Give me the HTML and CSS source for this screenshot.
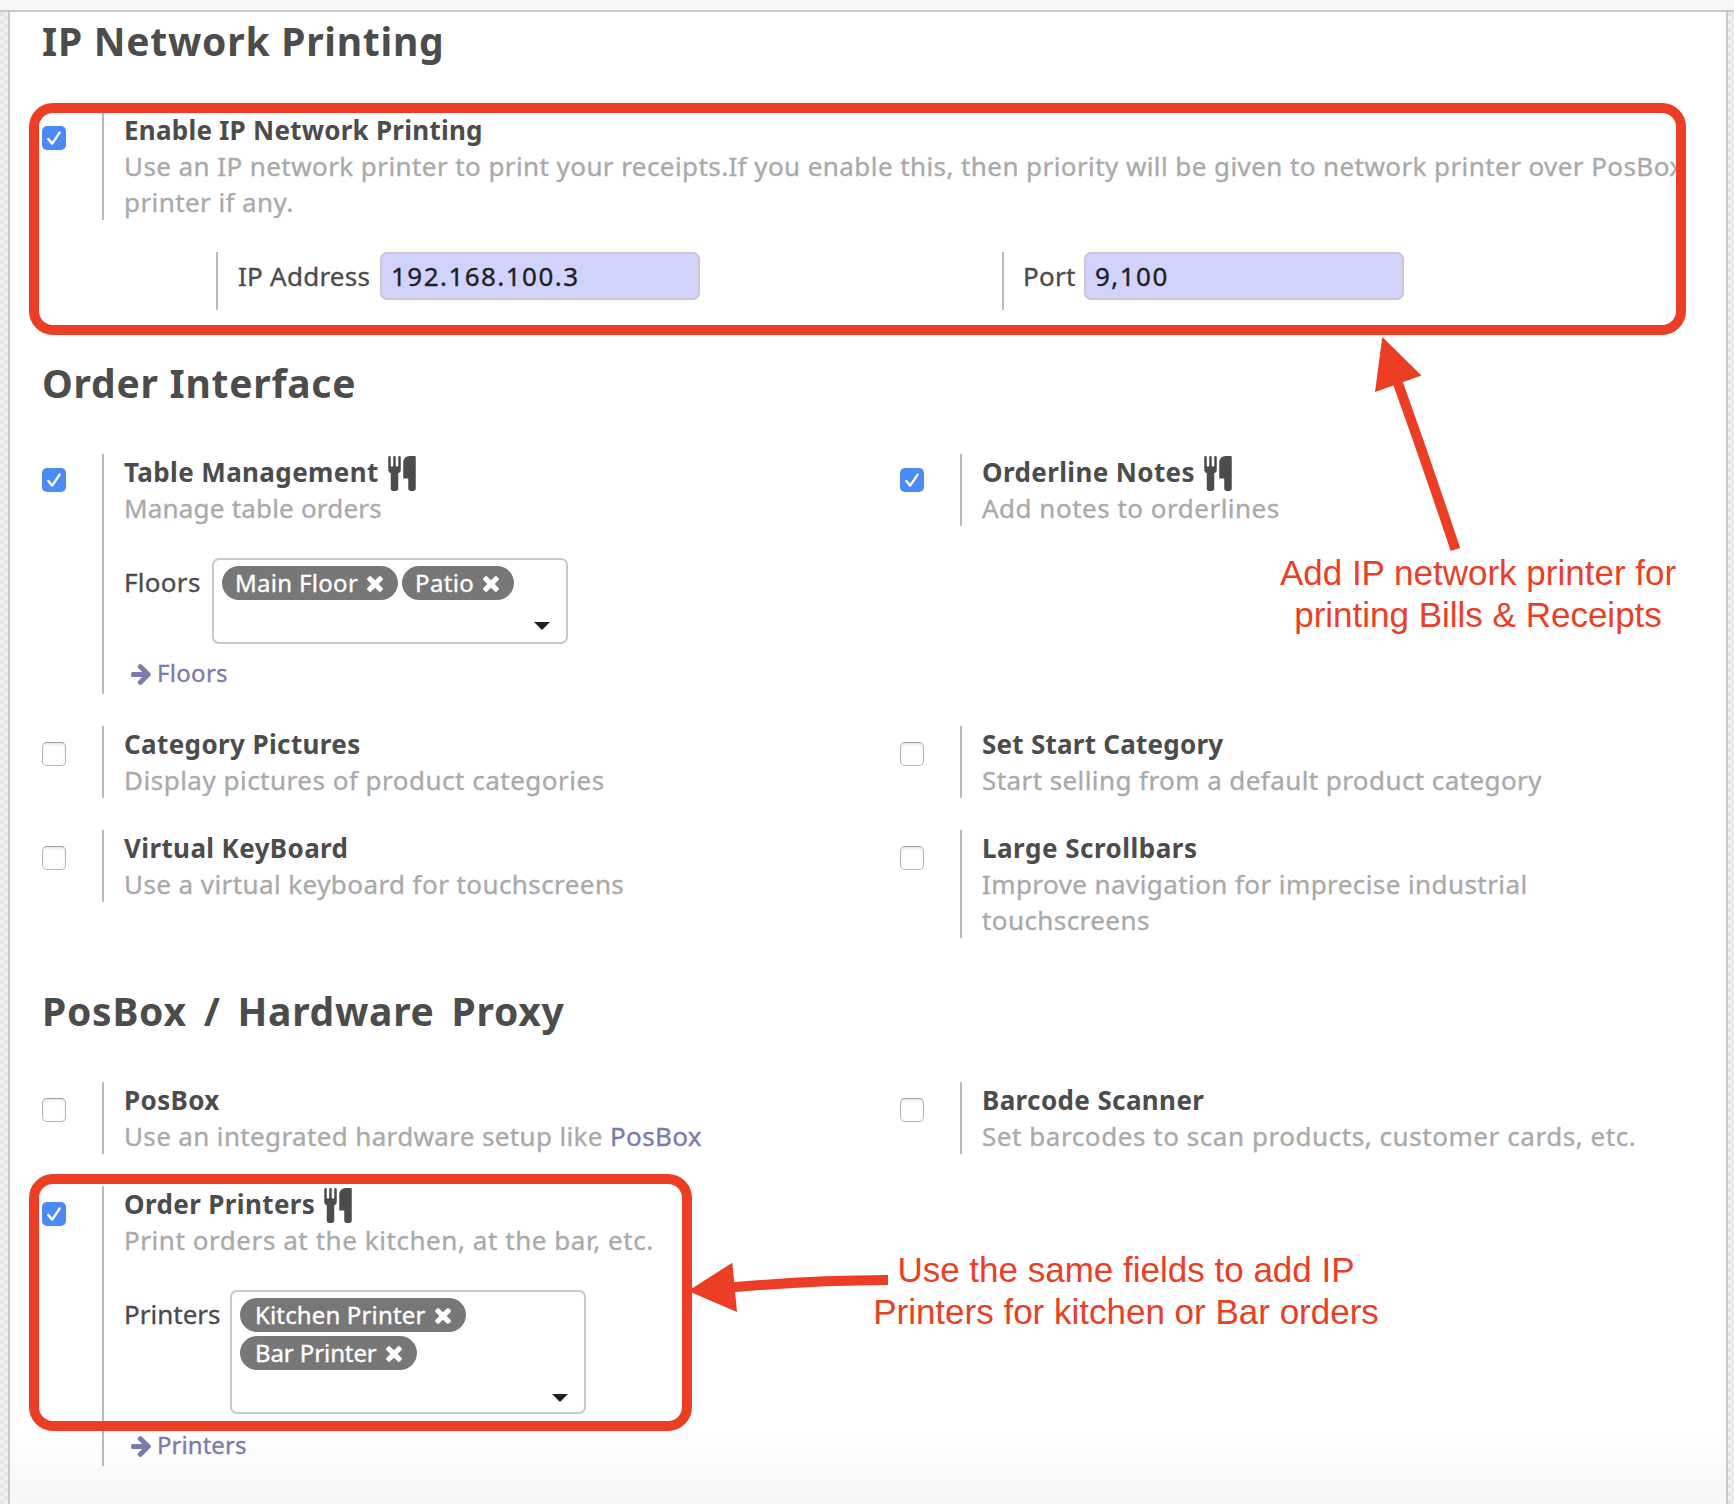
FILE: index.html
```
<!DOCTYPE html>
<html lang="en">
<head>
<meta charset="utf-8">
<title>Point of Sale Settings</title>
<link rel="stylesheet" href="styles.css">
</head>
<body>
<svg class="defs" width="0" height="0" aria-hidden="true">
  <symbol id="cutlery" viewBox="0 64 1408 1792"><path d="M640 128v640q0 61-35.5 111t-92.5 70v779q0 52-38 90t-90 38h-128q-52 0-90-38t-38-90v-779q-57-20-92.5-70t-35.5-111v-640q0-26 19-45t45-19 45 19 19 45v416q0 26 19 45t45 19 45-19 19-45v-416q0-26 19-45t45-19 45 19 19 45v416q0 26 19 45t45 19 45-19 19-45v-416q0-26 19-45t45-19 45 19 19 45zm768 0v1600q0 52-38 90t-90 38h-128q-52 0-90-38t-38-90v-512h-224q-13 0-22.5-9.5t-9.5-22.5v-800q0-132 94-226t226-94h256q26 0 45 19t19 45z"/></symbol>
  <symbol id="times" viewBox="302 366 1188 1188"><path d="M1490 1322q0 40-28 68l-136 136q-28 28-68 28t-68-28l-294-294-294 294q-28 28-68 28t-68-28l-136-136q-28-28-28-68t28-68l294-294-294-294q-28-28-28-68t28-68l136-136q28-28 68-28t68 28l294 294 294-294q28-28 68-28t68 28l136 136q28 28 28 68t-28 68l-294 294 294 294q28 28 28 68z"/></symbol>
  <symbol id="arrow" viewBox="128 181 1472 1558"><path d="M1600 960q0 54-37 91l-651 651q-39 37-91 37-51 0-90-37l-75-75q-38-38-38-91t38-91l293-293h-704q-52 0-84.5-37.5t-32.5-90.5v-128q0-53 32.5-90.5t84.5-37.5h704l-293-294q-38-36-38-90t38-90l75-75q38-38 90-38 53 0 91 38l651 651q37 35 37 90z"/></symbol>
  <symbol id="check" viewBox="0 0 24 24"><path d="M6.3 13l3.9 4.6L17.6 6.6" fill="none" stroke="#fff" stroke-width="2.4" stroke-linecap="round" stroke-linejoin="round"/></symbol>
</svg>

<div class="toolbar"></div>
<main class="sheet">
  <section class="section">
    <h2>IP Network Printing</h2>
    <div class="setting">
      <span class="box box-on box-high"><svg><use href="#check"/></svg></span>
      <div class="pane">
        <div class="title title-snug">Enable IP Network Printing</div>
        <div class="desc desc-snug">Use an IP network printer to print your receipts.If you enable this, then priority will be given to network printer over PosBox<br>printer if any.</div>
      </div>
    </div>
    <div class="network">
      <div class="field"><label class="label-ip">IP Address</label><div class="input">192.168.100.3</div></div>
      <div class="field"><label class="label-port">Port</label><div class="input">9,100</div></div>
    </div>
  </section>

  <section class="section">
    <h2>Order Interface</h2>
    <div class="grid">
      <div class="setting">
        <span class="box box-on box-high"><svg><use href="#check"/></svg></span>
        <div class="pane">
          <div class="title">Table Management<svg class="cutlery"><use href="#cutlery"/></svg></div>
          <div class="desc desc-tight">Manage table orders</div>
          <div class="many">
            <label class="label-floors">Floors</label>
            <div class="select">
              <span class="tag">Main Floor<svg><use href="#times"/></svg></span>
              <span class="tag">Patio<svg><use href="#times"/></svg></span>
              <i class="caret"></i>
            </div>
          </div>
          <a class="link"><svg><use href="#arrow"/></svg>Floors</a>
        </div>
      </div>
      <div class="setting">
        <span class="box box-on box-high"><svg><use href="#check"/></svg></span>
        <div class="pane">
          <div class="title">Orderline Notes<svg class="cutlery"><use href="#cutlery"/></svg></div>
          <div class="desc">Add notes to orderlines</div>
        </div>
      </div>
      <div class="setting">
        <span class="box"></span>
        <div class="pane">
          <div class="title">Category Pictures</div>
          <div class="desc">Display pictures of product categories</div>
        </div>
      </div>
      <div class="setting">
        <span class="box"></span>
        <div class="pane">
          <div class="title title-snug">Set Start Category</div>
          <div class="desc desc-snug">Start selling from a default product category</div>
        </div>
      </div>
      <div class="setting">
        <span class="box"></span>
        <div class="pane">
          <div class="title">Virtual KeyBoard</div>
          <div class="desc desc-snug">Use a virtual keyboard for touchscreens</div>
        </div>
      </div>
      <div class="setting">
        <span class="box"></span>
        <div class="pane">
          <div class="title title-wide">Large Scrollbars</div>
          <div class="desc desc-snug">Improve navigation for imprecise industrial<br>touchscreens</div>
        </div>
      </div>
    </div>
  </section>

  <section class="section">
    <h2 class="spaced">PosBox / Hardware Proxy</h2>
    <div class="grid">
      <div class="setting">
        <span class="box"></span>
        <div class="pane">
          <div class="title">PosBox</div>
          <div class="desc desc-link">Use an integrated hardware setup like <a>PosBox</a></div>
        </div>
      </div>
      <div class="setting">
        <span class="box"></span>
        <div class="pane">
          <div class="title">Barcode Scanner</div>
          <div class="desc desc-wide">Set barcodes to scan products, customer cards, etc.</div>
        </div>
      </div>
      <div class="setting">
        <span class="box box-on"><svg><use href="#check"/></svg></span>
        <div class="pane">
          <div class="title">Order Printers<svg class="cutlery"><use href="#cutlery"/></svg></div>
          <div class="desc desc-wide">Print orders at the kitchen, at the bar, etc.</div>
          <div class="many">
            <label class="label-printers">Printers</label>
            <div class="select select-tall">
              <span class="tag tag-inset">Kitchen Printer<svg><use href="#times"/></svg></span>
              <span class="tag tag-inset tag-tight">Bar Printer<svg><use href="#times"/></svg></span>
              <i class="caret"></i>
            </div>
          </div>
          <a class="link link-low"><svg><use href="#arrow"/></svg>Printers</a>
        </div>
      </div>
    </div>
  </section>
</main>
<div class="fade"></div>

<div class="outline outline-network"></div>
<div class="outline outline-printers"></div>
<svg class="arrows" width="1734" height="1504" viewBox="0 0 1734 1504">
  <path class="head" d="M1382.3 337L1421.5 375.5L1375 392Z"/>
  <path class="shaft" d="M1396.5 379Q1427 464 1455.4 549.5"/>
  <path class="head" d="M688 1291L732.3 1262.7L737 1312Z"/>
  <path class="shaft" d="M730 1287.6Q810 1280.3 888 1280"/>
</svg>
<p class="note note-network">Add IP network printer for<br>printing Bills &amp; Receipts</p>
<p class="note note-printers">Use the same fields to add IP<br>Printers for kitchen or Bar orders</p>
</body>
</html>
```
FILE: styles.css
```
* { box-sizing: border-box; }

body {
  position: relative;
  width: 1734px;
  height: 1504px;
  margin: 0;
  overflow: hidden;
  background: repeating-conic-gradient(#e4e4e4 0 25%, #efefef 0 50%) 0 0 / 8px 8px;
  color: #4c4c4c;
  font: 26px/36px "Noto Sans", sans-serif;
  letter-spacing: 0.5px;
  white-space: nowrap;
  -webkit-text-stroke: 0.35px currentColor;
}

svg { display: block; fill: currentColor; }
.defs { position: absolute; }

.toolbar {
  height: 12px;
  background: #f8f8f8;
  border-bottom: 2px solid #c8c8c8;
}

.sheet {
  height: 1492px;
  margin: 0 6px 0 8px;
  padding: 7px 0 0 32px;
  background: #fff;
  border: solid #c8c8d3;
  border-width: 0 2px;
}

.section { margin-bottom: 51px; }

h2 {
  margin: 0 0 49px;
  font-size: 39px;
  font-weight: 700;
  line-height: 44px;
  letter-spacing: 0.75px;
  -webkit-text-stroke: 0;
}
.spaced { word-spacing: 6px; }

.grid {
  display: grid;
  grid-template-columns: 858px 1fr;
  row-gap: 32px;
  align-items: start;
}

.setting { display: flex; align-items: stretch; }

.box {
  flex: none;
  width: 24px;
  height: 24px;
  margin: 16px 36px 0 0;
  border: 1px solid #b4b4b4;
  border-top-color: #9c9c9c;
  border-radius: 5px;
  background: #fff;
  box-shadow: inset 0 2px 2px #ececec;
}
.box-on { border: 0; background: #4b89f6; box-shadow: none; }
.box-high { margin-top: 14px; }
.box svg { width: 24px; height: 24px; }

.pane { border-left: 2px solid #bbb; padding-left: 20px; }

.title {
  display: flex;
  height: 36px;
  font-weight: 700;
  letter-spacing: 0.38px;
  -webkit-text-stroke: 0;
}
.title-snug { letter-spacing: 0.25px; }
.title-wide { letter-spacing: 0.5px; }
.cutlery { width: 28px; height: 35px; margin: 2px 0 0 9px; }

.desc { color: #aaa; }
.desc-tight { letter-spacing: 0.2px; }
.desc-snug { letter-spacing: 0.42px; }
.desc-link { letter-spacing: 0.36px; }
.desc-wide { letter-spacing: 0.56px; }
a { color: #7c7bad; }

.network {
  display: grid;
  grid-template-columns: 786px 1fr;
  margin: 32px 0 0 174px;
}
.field {
  display: flex;
  height: 58px;
  padding-left: 20px;
  border-left: 2px solid #bbb;
}
.field label { padding-top: 6px; letter-spacing: 0.25px; }
.label-ip { width: 142px; }
.label-port { width: 61px; margin-left: -1px; }
.input {
  width: 320px;
  height: 48px;
  padding: 4px 9px;
  border: 2px solid #c8c8c8;
  border-radius: 7px;
  background: #d2d2ff;
  color: #1f1f1f;
  letter-spacing: 1.45px;
}

.many { display: flex; align-items: flex-start; margin-top: 32px; }
.many label { padding-top: 6px; }
.label-floors { width: 88px; letter-spacing: 0.3px; }
.label-printers { width: 106px; letter-spacing: 0; }

.select {
  position: relative;
  display: flex;
  flex-wrap: wrap;
  align-content: flex-start;
  gap: 4px;
  width: 356px;
  height: 86px;
  padding: 6px 8px;
  border: 2px solid #c8c8c8;
  border-radius: 7px;
}
.select-tall { height: 124px; padding-right: 80px; }

.tag {
  display: flex;
  height: 34px;
  padding: 0 15px 0 13px;
  border-radius: 17px;
  background: #777;
  color: #fff;
  font-size: 24px;
  line-height: 34px;
  letter-spacing: 0.3px;
}
.tag-inset { padding-left: 15px; letter-spacing: 0.15px; }
.tag-tight { letter-spacing: -0.1px; }
.tag svg { width: 16px; height: 16px; margin: 10px 0 0 9px; }

.caret {
  position: absolute;
  right: 16px;
  bottom: 12px;
  border: solid transparent;
  border-width: 8px 8px 0;
  border-top-color: #1f1f1f;
}
.select-tall .caret { bottom: 10px; }

.link {
  display: flex;
  height: 39px;
  margin: 11px 0 0 7px;
  font-size: 24px;
  letter-spacing: 0.3px;
}
.link-low { margin-top: 13px; letter-spacing: 0.05px; }
.link svg { width: 20px; height: 21px; margin: 9px 6px 0 0; }

.fade {
  position: absolute;
  left: 10px;
  right: 8px;
  bottom: 0;
  height: 70px;
  background: linear-gradient(rgba(0, 0, 0, 0), rgba(0, 0, 0, 0.035));
}

/* Red call-outs drawn over the form */
.outline {
  position: absolute;
  left: 29px;
  border: 10px solid #eb3e25;
  border-radius: 24px;
}
.outline-network { top: 103px; width: 1657px; height: 232px; }
.outline-printers { top: 1174px; width: 663px; height: 257px; }

.arrows { position: absolute; left: 0; top: 0; }
.head { fill: #eb3e25; }
.shaft { fill: none; stroke: #eb3e25; stroke-width: 10; }

.note {
  position: absolute;
  margin: 0;
  color: #eb3e25;
  font: 35px/42px "Liberation Sans", sans-serif;
  letter-spacing: 0;
  text-align: center;
  -webkit-text-stroke: 0;
}
.note-network { left: 1228px; top: 552px; width: 500px; }
.note-printers { left: 826px; top: 1249px; width: 600px; }
```
